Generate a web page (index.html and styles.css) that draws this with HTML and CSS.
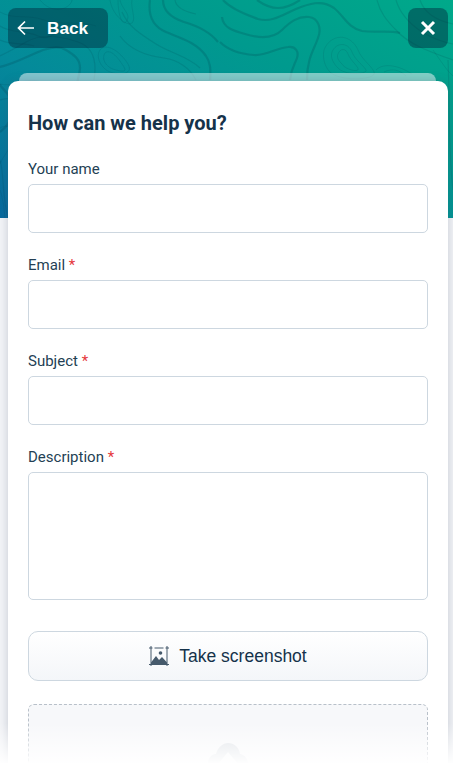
FILE: index.html
```html
<!DOCTYPE html>
<html lang="en">
<head>
<meta charset="utf-8">
<title>How can we help you?</title>
<link rel="stylesheet" href="styles.css">
</head>
<body>
<div class="page">
  <div class="hero">
    <svg class="topo" viewBox="0 0 453 218" preserveAspectRatio="none" aria-hidden="true">
      <g class="thick">
        <path d="M150 0C148 14 152 26 166 32C180 38 196 42 206 56C210 62 211 68 210 80"/>
        <path d="M163 0C163 12 172 18 184 22C198 26 210 32 218 42"/>
        <path d="M222 17C223 28 234 31 245 34C258 38 272 40 282 30C290 22 298 16 309 17C318 18 322 28 318 38C314 50 307 58 307 80"/>
        <path d="M220 42C228 50 240 54 254 55C266 56 276 48 288 47C296 46 299 52 297 58C295 64 291 68 290 80"/>
        <path d="M223 0C230 8 244 14 258 19C272 23 284 14 296 9C308 4 322 -1 334 8C344 16 348 28 362 31C376 33 388 30 400 33"/>
        <path d="M257 0C264 5 270 8 278 8C286 8 294 4 300 0"/>
        <path d="M0 67C14 64 28 56 43 50C52 47 60 46 66 50C76 56 80 60 80 68C80 72 78 78 77 84"/>
        <path d="M0 132C8 126 14 118 12 104C10 92 0 88 0 84"/>
      </g>
      <g class="mid">
        <path d="M377 0C380 12 386 20 396 30C408 44 430 52 453 60"/>
        <path d="M396 0C400 14 410 24 422 32C432 38 442 42 453 44"/>
        <path d="M420 0C424 12 434 20 453 24"/>
        <path d="M448 60C450 100 448 150 453 190"/>
        <path d="M0 26C12 34 26 30 38 36C50 42 58 30 70 24"/>
        <path d="M0 100C12 96 22 100 28 112C32 124 20 134 12 146C6 156 8 180 18 218"/>
        <path d="M0 40C14 46 24 42 34 46"/>
        <path d="M175 0C176 8 186 12 196 14"/>
        <path d="M122 12C128 26 140 34 156 44C172 54 188 56 200 68"/>
        <path d="M120 36C130 50 148 56 164 58C178 60 190 68 196 80"/>
        <path d="M0 56C8 52 16 48 26 42C40 34 60 36 78 42C90 46 98 56 94 80"/>
        <path d="M0 160C4 172 2 196 8 218"/>
      </g>
      <g class="thin">
        <path d="M324 50C330 34 350 32 358 50C362 60 372 66 374 72C378 80 340 82 330 72C326 68 322 60 324 50Z"/>
        <path d="M332 52C336 42 348 42 352 52C355 60 364 66 366 70C368 74 345 76 338 68C334 64 330 58 332 52Z"/>
        <path d="M338 54C340 48 346 48 348 54C350 60 360 68 358 70C354 72 344 68 342 64C340 62 336 58 338 54Z"/>
        <path d="M376 70C384 62 400 66 412 74M384 72C392 68 400 70 406 76"/>
        <path d="M106 52C112 50 118 58 122 64C128 72 124 72 116 70C106 68 100 58 106 52Z"/>
        <path d="M102 48C110 44 122 54 128 64C134 74 120 76 110 72C100 68 94 54 102 48Z"/>
        <path d="M120 0C122 10 132 14 126 22C122 26 118 14 118 0"/>
        <path d="M110 0C112 14 124 24 130 24C138 22 130 8 132 0"/>
        <path d="M0 84C16 88 30 74 44 84C56 92 46 108 28 112"/>
        <path d="M0 128C10 122 16 132 12 142C8 152 2 158 0 164"/>
        <path d="M40 0C48 10 60 12 68 6C72 3 72 0 72 0"/>
        <path d="M433 50C440 60 448 72 453 76"/>
        <path d="M0 12C14 20 28 14 44 20C60 26 80 20 96 26"/>
        <path d="M0 190C3 198 4 208 5 218"/>
      </g>
    </svg>
  </div>
  <main class="sheet">
    <div class="sheet-back"></div>
    <form class="card">
      <h1 class="title">How can we help you?</h1>
      <label class="field">
        <span class="label">Your name</span>
        <input class="input" type="text">
      </label>
      <label class="field">
        <span class="label">Email <b class="req">*</b></span>
        <input class="input" type="email">
      </label>
      <label class="field">
        <span class="label">Subject <b class="req">*</b></span>
        <input class="input" type="text">
      </label>
      <label class="field">
        <span class="label">Description <b class="req">*</b></span>
        <textarea class="input area"></textarea>
      </label>
      <button class="shot" type="button">
        <svg class="shot-icon" viewBox="0 0 20 20" aria-hidden="true">
          <path class="shot-line" d="M0 2H3.5M5.5 2H14.5M16.5 2H20M2 0V20M18 0V20M0 18.5H20"/>
          <circle cx="11.5" cy="7" r="1.8"/>
          <path d="M2 18L2 16.5L7 10L10 14L13 11L18 16.5V18Z"/>
        </svg>
        <span>Take screenshot</span>
      </button>
      <div class="drop">
        <svg class="cloud" viewBox="0 0 40 30" aria-hidden="true">
          <path d="M10 30C3 30 0 25 0 20C0 15 4 11 8 11C10 4 15 0 20 0C26 0 31 4 32 11C37 12 40 16 40 21C40 26 36 30 31 30H25V21H30L20 9L10 21H15V30Z"/>
        </svg>
      </div>
    </form>
  </main>
  <div class="actions">
    <button class="tool back" type="button">
      <svg class="back-icon" viewBox="0 0 18 16" aria-hidden="true"><path d="M17 8H1.5M8 1.5L1.5 8L8 14.5"/></svg>
      <span class="back-text">Back</span>
    </button>
    <button class="tool close" type="button" aria-label="Close">
      <svg class="close-icon" viewBox="0 0 16 16" aria-hidden="true"><path d="M2 2L14 14M14 2L2 14"/></svg>
    </button>
  </div>
  <div class="fade"></div>
</div>
</body>
</html>
```

FILE: styles.css
```css
* { box-sizing: border-box; }
html, body { margin: 0; height: 100%; }
body { background: #f3f4f7; overflow: hidden; font-family: Roboto, sans-serif; color: #15324a; }
.page {
  position: relative;
  display: grid;
  grid-template-columns: 1fr;
  grid-template-rows: auto;
  height: 763px;
  overflow: hidden;
  background: #f3f4f7;
}
.hero, .sheet, .actions { grid-area: 1 / 1; }
.hero {
  height: 218px;
  background: linear-gradient(28deg, #08699d 0%, #048a9a 36%, #009a8e 66%, #00a98a 100%);
}
.topo { display: block; width: 100%; height: 100%; fill: none; }
.thick { stroke: rgba(0, 60, 75, .2); stroke-width: 2.2; }
.mid { stroke: rgba(0, 60, 75, .15); stroke-width: 1.2; }
.thin { stroke: rgba(0, 60, 75, .12); stroke-width: 1; }
.sheet { padding: 73px 5px 0 8px; display: flex; flex-direction: column; align-items: stretch; }
.sheet-back {
  height: 8px;
  margin: 0 12px 0 11px;
  background: rgba(255, 255, 255, .5);
  border-radius: 8px 8px 0 0;
}
.card {
  flex: 1;
  display: flex;
  flex-direction: column;
  padding: 28px 20px 0;
  background: #fff;
  border-radius: 10px 10px 0 0;
  box-shadow: 0 0 10px rgba(60, 80, 110, .26);
}
.title { margin: 0 0 21px; font-size: 20px; line-height: 29px; font-weight: 700; color: #15324a; }
.field { display: flex; flex-direction: column; margin-bottom: 22px; }
.label { font-size: 15px; line-height: 21px; margin-bottom: 4px; color: #243f54; }
.req { font-weight: 400; color: #e5383b; }
.input {
  display: block;
  width: 100%;
  height: 49px;
  padding: 8px 12px;
  border: 1px solid #cdd7e0;
  border-radius: 5px;
  background: #fff;
  font: inherit;
  outline: none;
  resize: none;
}
.area { height: 128px; }
.field:last-of-type { margin-bottom: 31px; }
.shot {
  display: flex;
  align-items: center;
  justify-content: center;
  gap: 10px;
  height: 50px;
  padding: 0;
  margin-bottom: 23px;
  border: 1px solid #cdd7e0;
  border-radius: 10px;
  background: linear-gradient(#fff, #f4f6f9);
  font-family: "Liberation Sans", Arial, sans-serif;
  font-size: 17.5px;
  color: #15324a;
}
.shot-icon { width: 20px; height: 20px; fill: #45596b; }
.shot-line { fill: none; stroke: #45596b; stroke-width: 1; }
.drop {
  display: flex;
  justify-content: center;
  height: 130px;
  flex: none;
  padding-top: 38px;
  border: 1px dashed #b8c0c9;
  border-radius: 6px;
  background: #f7f8fa;
}
.cloud { width: 40px; height: 30px; fill: #dfe3e8; }
.actions { display: flex; justify-content: space-between; align-items: flex-start; padding: 8px 5px 0 8px; }
.tool {
  display: flex;
  align-items: center;
  height: 40px;
  padding: 0;
  border: 0;
  border-radius: 8px;
  background: rgba(0, 40, 60, .45);
  color: #fff;
  font-family: "Liberation Sans", Arial, sans-serif;
  font-size: 17.2px;
  font-weight: 700;
}
.back { width: 100px; padding-left: 9px; gap: 12px; }
.back-text { padding-top: 1px; }
.close { width: 40px; justify-content: center; }
.back-icon { width: 18px; height: 16px; fill: none; stroke: #fff; stroke-width: 1.7; }
.close-icon { width: 16px; height: 16px; fill: none; stroke: #fff; stroke-width: 3; }
.fade {
  position: absolute;
  left: 0;
  right: 0;
  bottom: 0;
  height: 40px;
  background: linear-gradient(rgba(255, 255, 255, 0), rgba(255, 255, 255, .95));
}
```
